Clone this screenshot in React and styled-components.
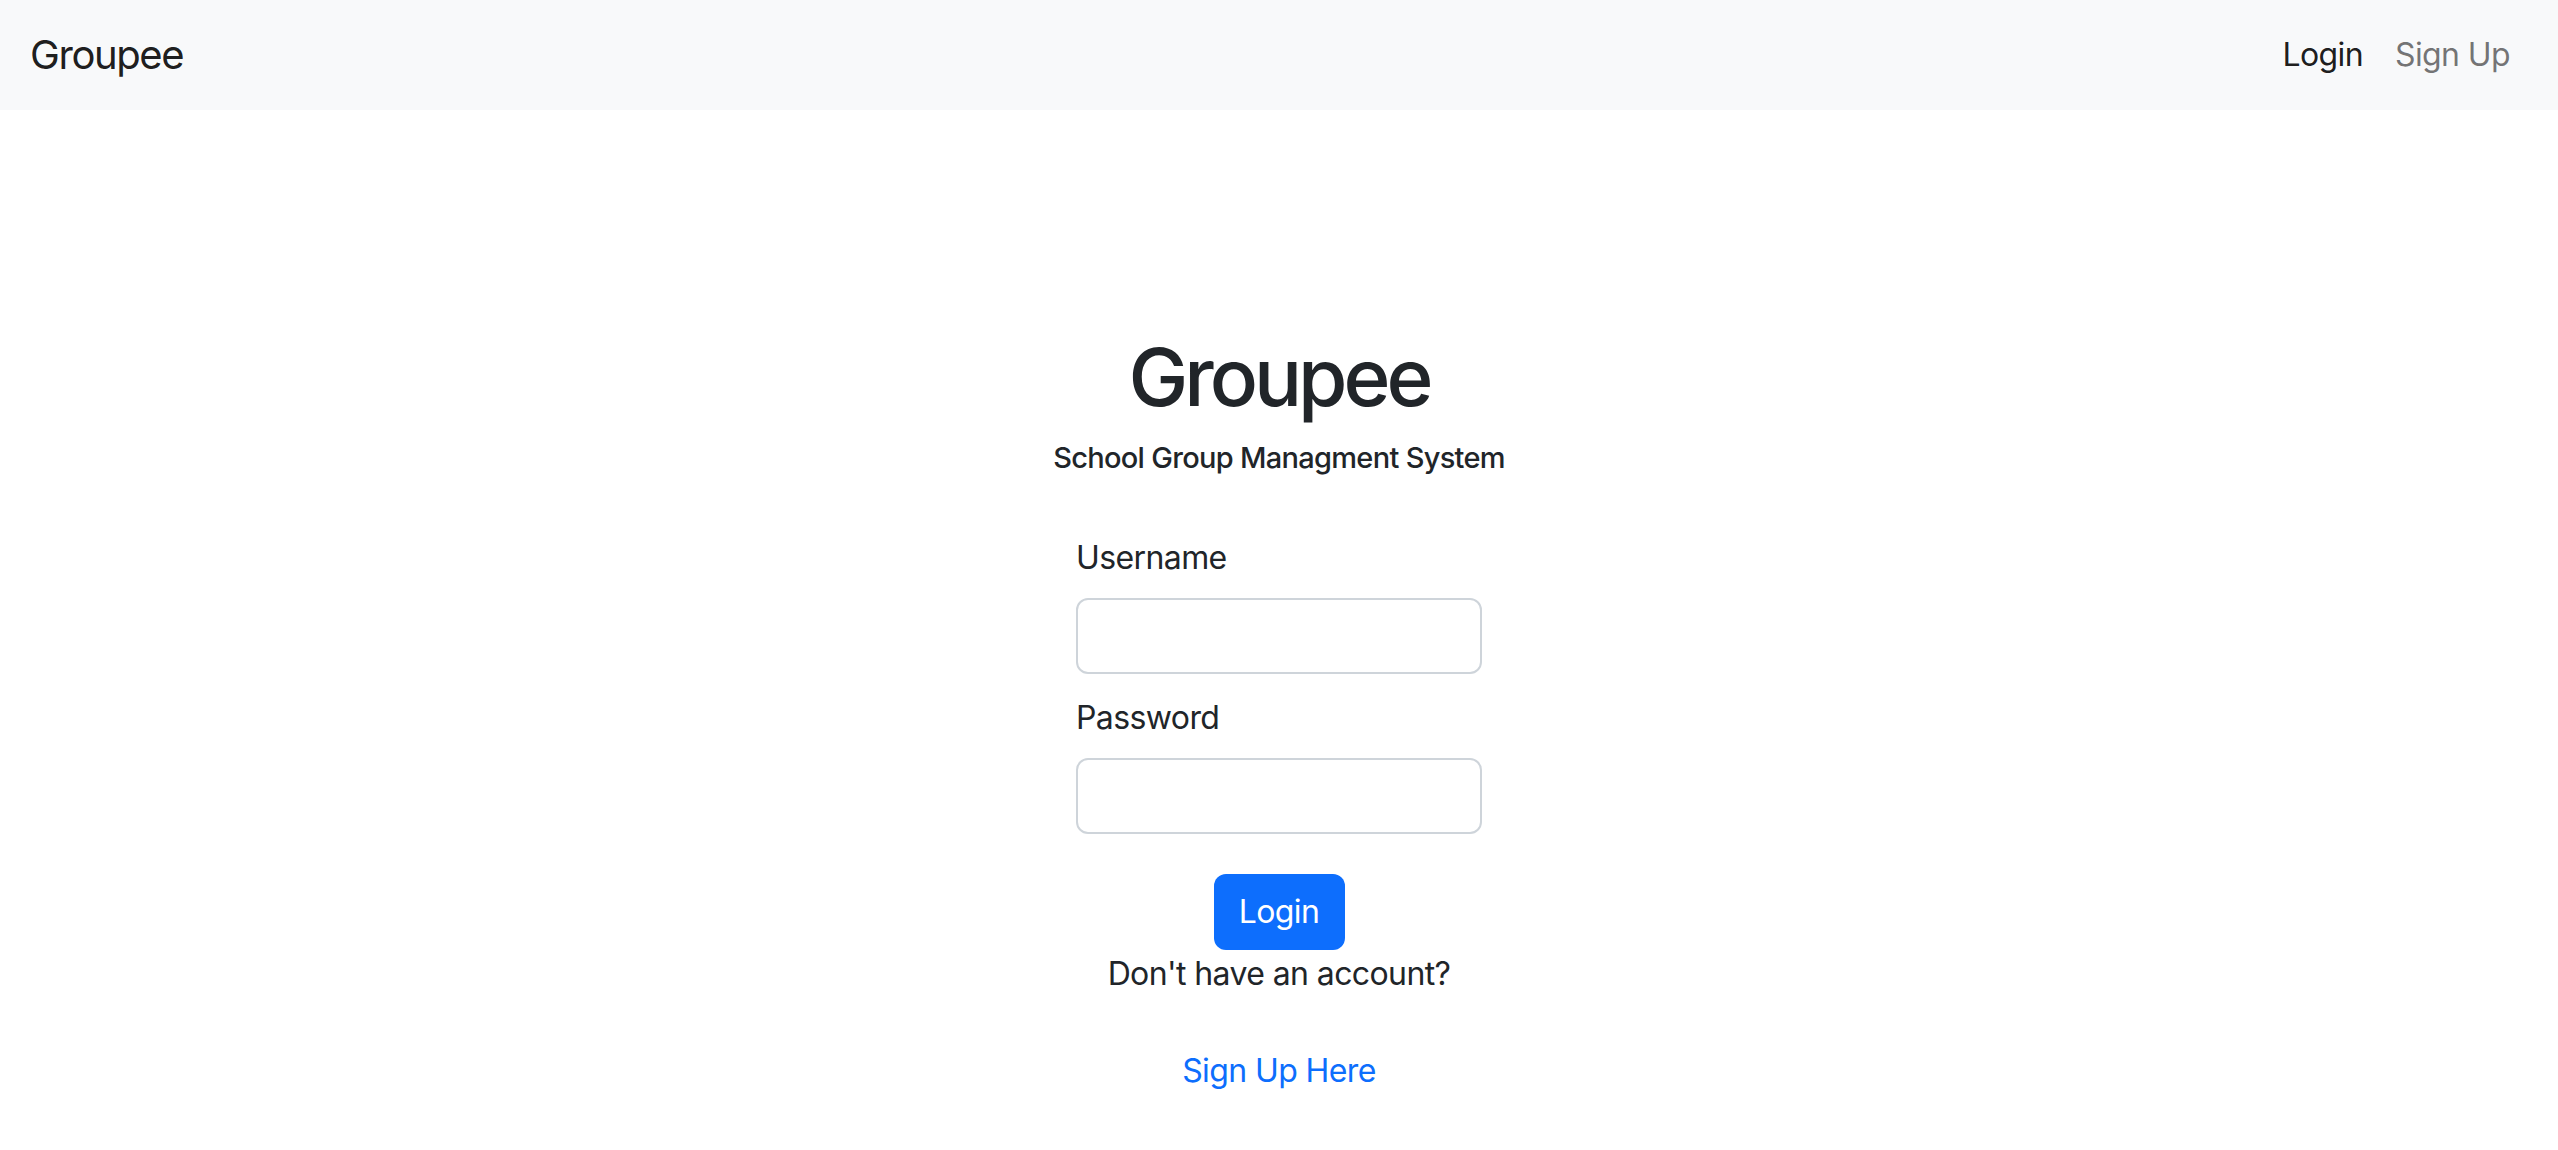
import React from 'react';
import styled, { createGlobalStyle } from 'styled-components';

const GlobalStyle = createGlobalStyle`
    html, body {
        margin: 0;
        padding: 0;
        background: #ffffff;
    }
    body {
        font-family: Inter, "Noto Sans", "Liberation Sans", sans-serif;
        font-size: 32px;
        line-height: 1.5;
        letter-spacing: -0.6px;
        color: #212529;
    }
    * {
        box-sizing: border-box;
    }
`;

const Navbar = styled.nav`
    display: flex;
    align-items: center;
    justify-content: space-between;
    height: 110px;
    padding: 0 32px 0 30px;
    background: #f8f9fa;
`;

const Brand = styled.a`
    font-size: 40px;
    line-height: 60px;
    letter-spacing: -1.4px;
    color: rgba(0, 0, 0, 0.9);
    text-decoration: none;
`;

const NavLinks = styled.div`
    display: flex;
    align-items: center;
`;

const NavLink = styled.a`
    padding: 0 16px;
    font-size: 32px;
    line-height: 48px;
    color: ${(p) => (p.$active ? 'rgba(0, 0, 0, 0.9)' : 'rgba(0, 0, 0, 0.55)')};
    text-decoration: none;
`;

const Main = styled.main`
    display: flex;
    flex-direction: column;
    align-items: center;
    padding-top: 219px;
`;

const Header = styled.header`
    display: flex;
    flex-direction: column;
    align-items: center;
`;

const Title = styled.h1`
    margin: 0 0 15px;
    font-size: 80px;
    font-weight: 500;
    line-height: 96px;
    letter-spacing: -4px;
`;

const Subtitle = styled.h6`
    margin: 0;
    font-size: 29px;
    font-weight: 500;
    line-height: 36px;
    letter-spacing: -0.7px;
`;

const Form = styled.form`
    display: flex;
    flex-direction: column;
    width: 406px;
    margin-top: 58px;
`;

const Field = styled.div`
    display: flex;
    flex-direction: column;
    margin-bottom: ${(p) => p.$gap || 0}px;
`;

const Label = styled.label`
    margin-bottom: 16px;
    font-size: 32px;
    line-height: 48px;
`;

const Input = styled.input`
    height: 76px;
    padding: 12px 24px;
    border: 2px solid #ced4da;
    border-radius: 12px;
    font-family: inherit;
    font-size: 32px;
    color: #212529;
    background: #fff;
    outline: none;
`;

const Button = styled.button`
    align-self: center;
    width: 131px;
    height: 76px;
    margin-top: 40px;
    border: none;
    border-radius: 12px;
    background: #0d6efd;
    color: #fff;
    font-family: inherit;
    font-size: 32px;
    line-height: 48px;
    letter-spacing: -0.6px;
`;

const Note = styled.p`
    margin: 0;
    font-size: 32px;
    line-height: 48px;
    text-align: center;
`;

const SignUpLink = styled.a`
    margin-top: 49px;
    font-size: 32px;
    line-height: 48px;
    color: #0d6efd;
    text-decoration: none;
`;

const App = () => {
    return (
        <>
            <GlobalStyle />
            <Navbar>
                <Brand href="#">Groupee</Brand>
                <NavLinks>
                    <NavLink href="#" $active>Login</NavLink>
                    <NavLink href="#">Sign Up</NavLink>
                </NavLinks>
            </Navbar>
            <Main>
                <Header>
                    <Title>Groupee</Title>
                    <Subtitle>School Group Managment System</Subtitle>
                </Header>
                <Form onSubmit={(e) => e.preventDefault()}>
                    <Field $gap={20}>
                        <Label htmlFor="username">Username</Label>
                        <Input id="username" type="text" />
                    </Field>
                    <Field>
                        <Label htmlFor="password">Password</Label>
                        <Input id="password" type="password" />
                    </Field>
                    <Button type="submit">Login</Button>
                    <Note>Don't have an account?</Note>
                </Form>
                <SignUpLink href="#">Sign Up Here</SignUpLink>
            </Main>
        </>
    );
};

export default App;
